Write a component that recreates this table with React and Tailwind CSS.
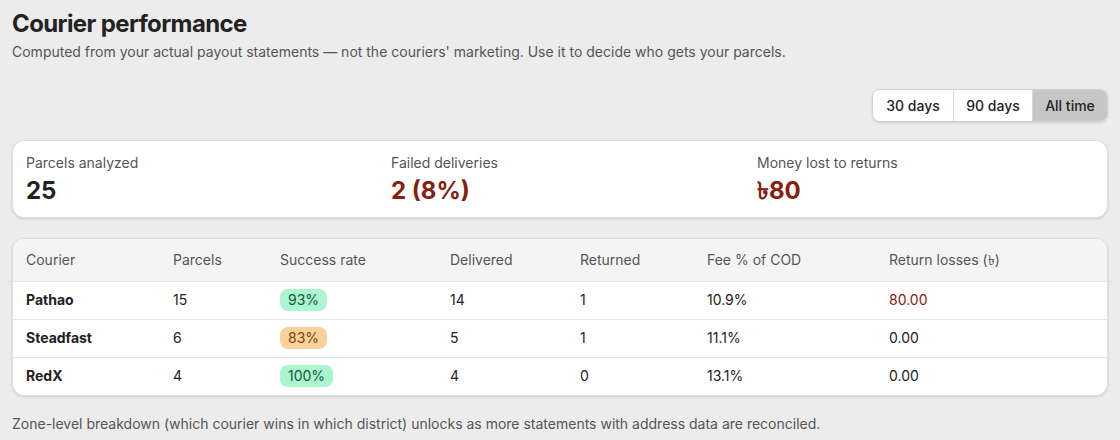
import React, { useState } from 'react';

const rows = [
  { name: 'Pathao', parcels: 15, rate: '93%', tone: 'good', delivered: 14, returned: 1, fee: '10.9%', loss: '80.00' },
  { name: 'Steadfast', parcels: 6, rate: '83%', tone: 'warn', delivered: 5, returned: 1, fee: '11.1%', loss: '0.00' },
  { name: 'RedX', parcels: 4, rate: '100%', tone: 'good', delivered: 4, returned: 0, fee: '13.1%', loss: '0.00' },
];

const ranges = ['30 days', '90 days', 'All time'];

export default function App() {
  const [range, setRange] = useState('All time');

  return (
    <div className="min-h-[440px] bg-[#ececec] px-3 pt-2 text-[#222] font-['Inter',sans-serif]">
      <h1 className="text-2xl font-bold tracking-tight">Courier performance</h1>
      <p className="mt-0.5 text-sm text-[#555]">
        Computed from your actual payout statements — not the couriers' marketing. Use it to decide who gets your parcels.
      </p>

      <div className="mt-[27px] flex justify-end">
        <div className="flex overflow-hidden rounded-lg border border-[#d2d2d2] bg-white shadow-sm">
          {ranges.map((r, i) => (
            <button
              key={r}
              onClick={() => setRange(r)}
              className={`h-[31px] text-sm font-medium ${i === 0 ? 'w-[80px]' : i === 1 ? 'w-[79px] border-l border-[#d8d8d8]' : 'w-[75px] border-l border-[#d8d8d8]'} ${range === r ? 'bg-[#c6c6c6]' : 'bg-white'}`}
            >
              {r}
            </button>
          ))}
        </div>
      </div>

      <div className="mt-[18px] grid grid-cols-[365px_366px_1fr] rounded-xl border border-[#dcdcdc] bg-white px-[13px] py-3 shadow-sm">
        <div>
          <div className="text-sm leading-5 text-[#555]">Parcels analyzed</div>
          <div className="mt-1 text-2xl font-bold leading-7">25</div>
        </div>
        <div>
          <div className="text-sm leading-5 text-[#555]">Failed deliveries</div>
          <div className="mt-1 text-2xl font-bold leading-7 text-[#86200f]">2 (8%)</div>
        </div>
        <div>
          <div className="text-sm leading-5 text-[#555]">Money lost to returns</div>
          <div className="mt-1 text-2xl font-bold leading-7 text-[#86200f]">৳80</div>
        </div>
      </div>

      <div className="mt-5 overflow-hidden rounded-xl border border-[#dcdcdc] bg-white shadow-sm">
        <table className="w-full text-left text-sm">
          <thead>
            <tr className="h-[42px] bg-[#f4f4f4] text-[#555]">
              <th className="w-[160px] pl-[13px] font-normal">Courier</th>
              <th className="w-[107px] font-normal">Parcels</th>
              <th className="w-[170px] font-normal">Success rate</th>
              <th className="w-[130px] font-normal">Delivered</th>
              <th className="w-[127px] font-normal">Returned</th>
              <th className="w-[182px] font-normal">Fee % of COD</th>
              <th className="font-normal">Return losses (৳)</th>
            </tr>
          </thead>
          <tbody>
            {rows.map((r) => (
              <tr key={r.name} className="h-[38px] border-t border-[#e6e6e6]">
                <td className="pl-[13px] font-bold">{r.name}</td>
                <td>{r.parcels}</td>
                <td>
                  <span
                    className={`inline-block rounded-lg px-2 py-px text-sm ${r.tone === 'good' ? 'bg-[#abf5cf] text-[#155a37]' : 'bg-[#fbd09a] text-[#7a4310]'}`}
                  >
                    {r.rate}
                  </span>
                </td>
                <td>{r.delivered}</td>
                <td>{r.returned}</td>
                <td>{r.fee}</td>
                <td className={r.loss !== '0.00' ? 'text-[#86200f]' : ''}>{r.loss}</td>
              </tr>
            ))}
          </tbody>
        </table>
      </div>

      <p className="mt-[18px] text-sm text-[#555]">
        Zone-level breakdown (which courier wins in which district) unlocks as more statements with address data are reconciled.
      </p>
    </div>
  );
}
